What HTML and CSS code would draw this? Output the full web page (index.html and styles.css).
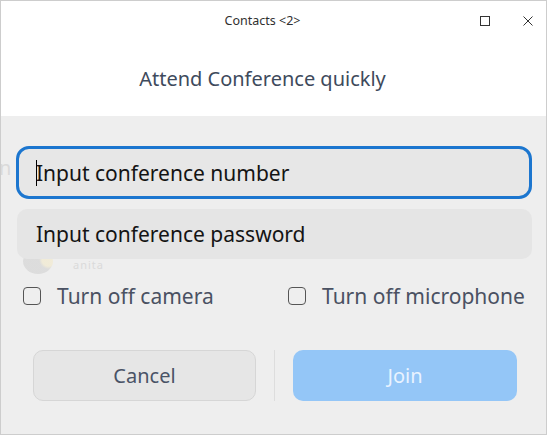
FILE: index.html
```html
<!DOCTYPE html>
<html>
<head>
<meta charset="utf-8">
<link rel="stylesheet" href="styles.css">
</head>
<body>
<div class="window">
  <div class="header">
    <div class="titlebar">
      <span class="title">Contacts &lt;2&gt;</span>
      <div class="controls">
        <svg class="ctl" width="12" height="12" viewBox="0 0 12 12"><rect x="1.5" y="1.5" width="9" height="9" fill="none" stroke="#333" stroke-width="1"/></svg>
        <svg class="ctl" width="12" height="12" viewBox="0 0 12 12"><path d="M1.5 1.5 L10.5 10.5 M10.5 1.5 L1.5 10.5" stroke="#333" stroke-width="1" fill="none"/></svg>
      </div>
    </div>
    <div class="heading">Attend Conference quickly</div>
  </div>
  <div class="content">
    <div class="ghost">
      <span class="ghost-n">n</span>
      <span class="ghost-avatar"></span>
      <span class="ghost-name">anita</span>
    </div>
    <div class="field focused"><span class="caret"></span>Input conference number</div>
    <div class="field">Input conference password</div>
    <div class="checks">
      <label class="check"><span class="box"></span>Turn off camera</label>
      <label class="check"><span class="box"></span>Turn off microphone</label>
    </div>
    <div class="buttons">
      <div class="btn cancel">Cancel</div>
      <div class="sep"></div>
      <div class="btn join">Join</div>
    </div>
  </div>
</div>
</body>
</html>
```

FILE: styles.css
```css
* { box-sizing: border-box; }
html, body { margin: 0; padding: 0; }
body { font-family: "Noto Sans", "Open Sans", sans-serif; background: #fff; }
.window {
  width: 547px; height: 435px;
  border: 1px solid #cdcdcd;
  display: flex; flex-direction: column;
  background: #eeeeee;
  overflow: hidden;
}
.header { background: #ffffff; height: 115px; flex: none; }
.titlebar {
  height: 39px; position: relative;
  display: flex; align-items: center; justify-content: center;
  padding-right: 22px;
}
.title { font-size: 12.5px; color: #303030; }
.controls {
  position: absolute; right: 12px; top: 14px;
  display: flex; gap: 31px;
}
.ctl { display: block; }
.heading {
  height: 76px; display: flex; align-items: center; justify-content: center;
  padding-right: 22px;
  font-size: 20px; color: #3e4a5c;
}
.content { flex: 1; position: relative; padding: 30px 14px 0 16px; }
.ghost { position: absolute; left: 0; top: 0; right: 0; bottom: 0; pointer-events: none; }
.ghost-n { position: absolute; left: -2px; top: 38px; font-size: 20px; color: #dadada; }
.ghost-avatar {
  position: absolute; left: 22px; top: 132px; width: 30px; height: 26px; border-radius: 50%;
  background: radial-gradient(circle at 85% 45%, #f1ead2 0 22%, #d8d8d8 32%);
  opacity: 0.8;
}
.ghost-name {
  position: absolute; left: 72px; top: 144px;
  font-size: 11px; line-height: 10px; color: #dadada; letter-spacing: 1px;
}
.field {
  position: relative;
  height: 50px; border-radius: 10px; background: #e5e5e5;
  display: flex; align-items: center;
  padding-left: 19px;
  font-size: 21px; color: #141414;
  margin-bottom: 10px;
}
.field.focused {
  height: 53px; border: 3px solid #1c76cf; border-radius: 13px;
  padding-left: 16px; background: #e7e7e7;
  margin-left: -1px;
}
.caret {
  display: inline-block; width: 1px; height: 26px; background: #000;
  margin-right: -1px; margin-left: 1px;
}
.checks {
  display: grid; grid-template-columns: 265px auto;
  margin: 23px 0 0 6px; height: 28px; align-items: center;
}
.check { display: flex; align-items: center; gap: 16px; font-size: 21px; color: #4a5162; }
.box {
  width: 18px; height: 18px; border: 1.5px solid #555; border-radius: 4px; flex: none;
}
.buttons {
  display: flex; align-items: stretch;
  margin: 40px 0 0 16px; height: 51px;
}
.btn {
  display: flex; align-items: center; justify-content: center;
  border-radius: 10px; font-size: 20px;
}
.cancel { width: 223px; background: #e6e6e6; border: 1px solid #d6d6d6; color: #4a5366; }
.sep { width: 1px; background: #dddddd; margin: 0 18px; }
.join { width: 224px; background: #94c6f7; color: #e9f3ff; }
```
